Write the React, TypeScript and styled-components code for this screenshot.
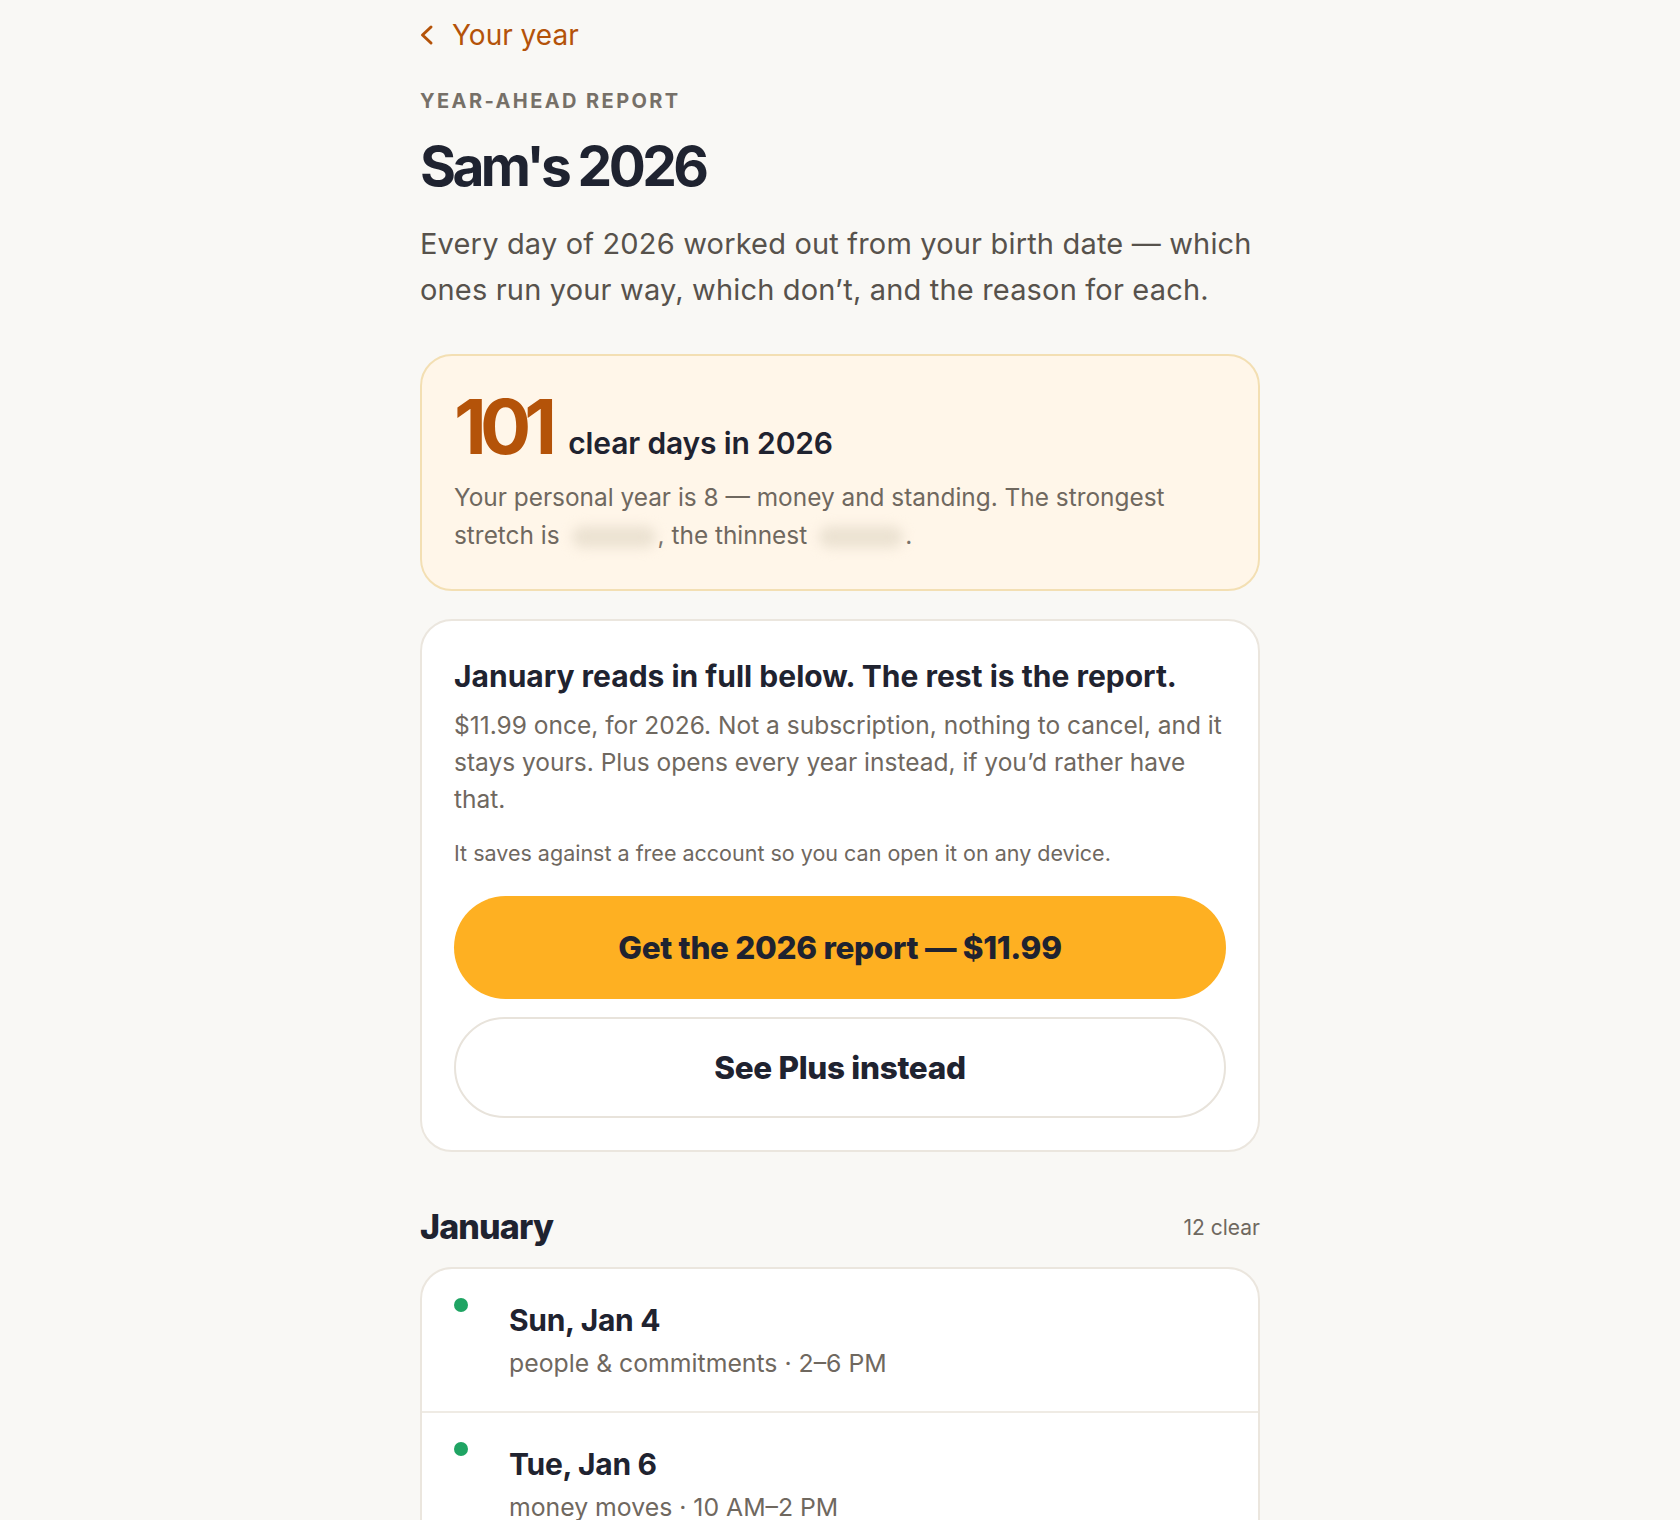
import styled, { createGlobalStyle } from "styled-components";

const GlobalStyle = createGlobalStyle`
  body {
    margin: 0;
    background: #f9f8f5;
    font-family: Inter, "Liberation Sans", sans-serif;
    color: #1f2330;
  }
`;

const days = [
  { date: "Sun, Jan 4", note: "people & commitments · 2–6 PM" },
  { date: "Tue, Jan 6", note: "money moves · 10 AM–2 PM" },
  { date: "Fri, Jan 9", note: "starting something · 9 AM–1 PM" },
];

const BackIcon = () => (
  <svg width="16" height="24" viewBox="0 0 16 24" fill="none">
    <path
      d="M11 4 L2.5 12 L11 20"
      stroke="currentColor"
      strokeWidth="3"
      strokeLinecap="round"
      strokeLinejoin="round"
    />
  </svg>
);

export default function App() {
  return (
    <>
      <GlobalStyle />
      <Page>
        <BackLink href=".">
          <BackIcon />
          Your year
        </BackLink>
        <Eyebrow>Year-ahead report</Eyebrow>
        <Title>Sam's 2026</Title>
        <Intro>
          Every day of 2026 worked out from your birth date — which ones run
          your way, which don’t, and the reason for each.
        </Intro>

        <SummaryCard>
          <CountRow>
            <Count>101</Count>
            <CountLabel>clear days in 2026</CountLabel>
          </CountRow>
          <SummaryText>
            Your personal year is 8 — money and standing. The strongest stretch
            is<Hidden aria-hidden="true" />, the thinnest<Hidden aria-hidden="true" />.
          </SummaryText>
        </SummaryCard>

        <OfferCard>
          <OfferTitle>January reads in full below. The rest is the report.</OfferTitle>
          <OfferText>
            $11.99 once, for 2026. Not a subscription, nothing to cancel, and it
            stays yours. Plus opens every year instead, if you’d rather have
            that.
          </OfferText>
          <OfferNote>
            It saves against a free account so you can open it on any device.
          </OfferNote>
          <Button $primary>Get the 2026 report — $11.99</Button>
          <Button>See Plus instead</Button>
        </OfferCard>

        <MonthHeader>
          <MonthName>January</MonthName>
          <MonthCount>12 clear</MonthCount>
        </MonthHeader>

        <DayList>
          {days.map((d) => (
            <DayRow key={d.date}>
              <Dot />
              <div>
                <DayDate>{d.date}</DayDate>
                <DayNote>{d.note}</DayNote>
              </div>
            </DayRow>
          ))}
        </DayList>
      </Page>
    </>
  );
}

const Page = styled.main`
  width: 840px;
  margin: 0 auto;
  padding: 18px 0 60px;
  display: flex;
  flex-direction: column;
`;

const BackLink = styled.a`
  display: flex;
  align-items: center;
  gap: 16px;
  height: 34px;
  font-size: 28px;
  line-height: 34px;
  color: #b45309;
  text-decoration: none;
  align-self: flex-start;
`;

const Eyebrow = styled.div`
  margin-top: 37px;
  font-size: 20px;
  line-height: 24px;
  font-weight: 700;
  letter-spacing: 0.12em;
  text-transform: uppercase;
  color: #767068;
`;

const Title = styled.h1`
  margin: 18px 0 0;
  font-size: 55px;
  line-height: 70px;
  font-weight: 700;
  letter-spacing: -0.065em;
  color: #1f2330;
`;

const Intro = styled.p`
  margin: 20px 0 0;
  font-size: 29px;
  line-height: 46px;
  letter-spacing: 0.006em;
  color: #57524c;
`;

const SummaryCard = styled.section`
  margin-top: 41px;
  padding: 32px 32px 35px;
  background: #fff6e9;
  border: 2px solid #f3dfb3;
  border-radius: 32px;
`;

const CountRow = styled.div`
  display: flex;
  align-items: baseline;
  gap: 18px;
`;

const Count = styled.span`
  font-size: 76px;
  line-height: 76px;
  font-weight: 700;
  letter-spacing: -0.09em;
  color: #b45309;
`;

const CountLabel = styled.span`
  font-size: 30px;
  font-weight: 600;
  letter-spacing: -0.005em;
  color: #1f2330;
`;

const SummaryText = styled.p`
  margin: 14px 0 0;
  font-size: 24.4px;
  line-height: 38px;
  color: #6f685f;
`;

const Hidden = styled.span`
  display: inline-block;
  width: 84px;
  height: 22px;
  margin: 0 2px 0 12px;
  vertical-align: -4px;
  border-radius: 11px;
  background: #ece2d2;
  filter: blur(6px);
`;

const OfferCard = styled.section`
  margin-top: 28px;
  padding: 37px 32px 32px;
  background: #ffffff;
  border: 2px solid #ebe6de;
  border-radius: 32px;
  display: flex;
  flex-direction: column;
`;

const OfferTitle = styled.h2`
  margin: 0;
  font-size: 30px;
  line-height: 36px;
  font-weight: 700;
  letter-spacing: 0;
  color: #1f2330;
`;

const OfferText = styled.p`
  margin: 13px 0 0;
  font-size: 24.5px;
  line-height: 37px;
  color: #6f685f;
`;

const OfferNote = styled.p`
  margin: 20px 0 0;
  font-size: 21.5px;
  line-height: 30px;
  color: #6f685f;
`;

const Button = styled.button<{ $primary?: boolean }>`
  margin-top: ${({ $primary }) => ($primary ? "28px" : "18px")};
  height: ${({ $primary }) => ($primary ? "103px" : "101px")};
  border-radius: 999px;
  border: ${({ $primary }) => ($primary ? "none" : "2px solid #e8e3db")};
  background: ${({ $primary }) => ($primary ? "#feb022" : "#ffffff")};
  font-family: inherit;
  font-size: 31.5px;
  font-weight: 800;
  letter-spacing: -0.01em;
  color: #1f2330;
  cursor: pointer;
`;

const MonthHeader = styled.div`
  margin-top: 53px;
  display: flex;
  align-items: center;
  justify-content: space-between;
`;

const MonthName = styled.h3`
  margin: 0;
  font-size: 34px;
  line-height: 44px;
  font-weight: 800;
  letter-spacing: -0.025em;
  color: #1f2330;
`;

const MonthCount = styled.span`
  font-size: 21px;
  line-height: 28px;
  margin-top: 2px;
  color: #6f685f;
`;

const DayList = styled.ul`
  list-style: none;
  margin: 18px 0 0;
  padding: 0;
  background: #ffffff;
  border: 2px solid #ebe6de;
  border-radius: 32px;
  overflow: hidden;
`;

const DayRow = styled.li`
  display: grid;
  grid-template-columns: 14px 1fr;
  column-gap: 41px;
  align-items: start;
  padding: 29px 32px 31px;

  & + & {
    border-top: 2px solid #efebe4;
  }
`;

const Dot = styled.span`
  width: 14px;
  height: 14px;
  border-radius: 50%;
  background: #1fa463;
`;

const DayDate = styled.div`
  margin-top: 3px;
  font-size: 30px;
  line-height: 38px;
  font-weight: 700;
  letter-spacing: -0.01em;
  color: #1f2330;
`;

const DayNote = styled.div`
  margin-top: 7px;
  font-size: 24.8px;
  line-height: 34px;
  color: #6f685f;
`;
